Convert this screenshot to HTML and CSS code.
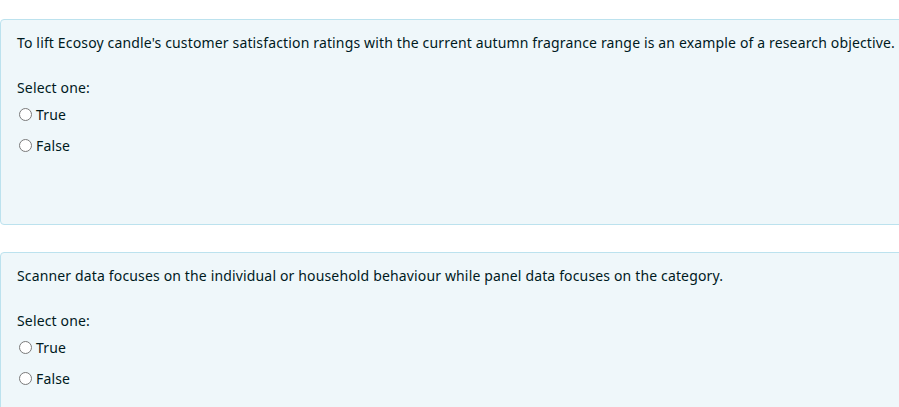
FILE: index.html
```html
<!DOCTYPE html>
<html>
<head>
<meta charset="utf-8">
<link rel="stylesheet" href="styles.css">
</head>
<body>
<div class="page">
  <div class="que">
    <div class="qtext">To lift Ecosoy candle's customer satisfaction ratings with the current autumn fragrance range is an example of a research objective.</div>
    <div class="prompt">Select one:</div>
    <div class="answer">
      <label class="opt"><span class="radio"></span><span>True</span></label>
      <label class="opt"><span class="radio"></span><span>False</span></label>
    </div>
  </div>
  <div class="que">
    <div class="qtext">Scanner data focuses on the individual or household behaviour while panel data focuses on the category.</div>
    <div class="prompt">Select one:</div>
    <div class="answer">
      <label class="opt"><span class="radio"></span><span>True</span></label>
      <label class="opt"><span class="radio"></span><span>False</span></label>
    </div>
  </div>
</div>
</body>
</html>
```

FILE: styles.css
```css
html, body {
  margin: 0;
  padding: 0;
  background: #ffffff;
  overflow: hidden;
}
body {
  font-family: "Noto Sans", "Open Sans", sans-serif;
  font-size: 14px;
  letter-spacing: 0.15px;
  line-height: 21px;
  color: #001a1e;
}
.page {
  padding-top: 19px;
  display: flex;
  flex-direction: column;
  gap: 27px;
  width: 930px;
}
.que {
  background: #eff7fa;
  border: 1px solid #bce2ee;
  border-radius: 4px;
  padding: 12px 16px 0 16px;
  height: 192px;
}
.qtext {
  margin: 0;
}
.prompt {
  margin-top: 24px;
}
.answer {
  display: flex;
  flex-direction: column;
  margin-top: 1px;
}
.opt {
  display: flex;
  align-items: center;
  height: 31px;
  gap: 4px;
  padding-left: 2px;
}
.radio {
  width: 11px;
  height: 11px;
  border: 1px solid #7a7a7a;
  border-radius: 50%;
  background: #ffffff;
  flex: none;
}
```
